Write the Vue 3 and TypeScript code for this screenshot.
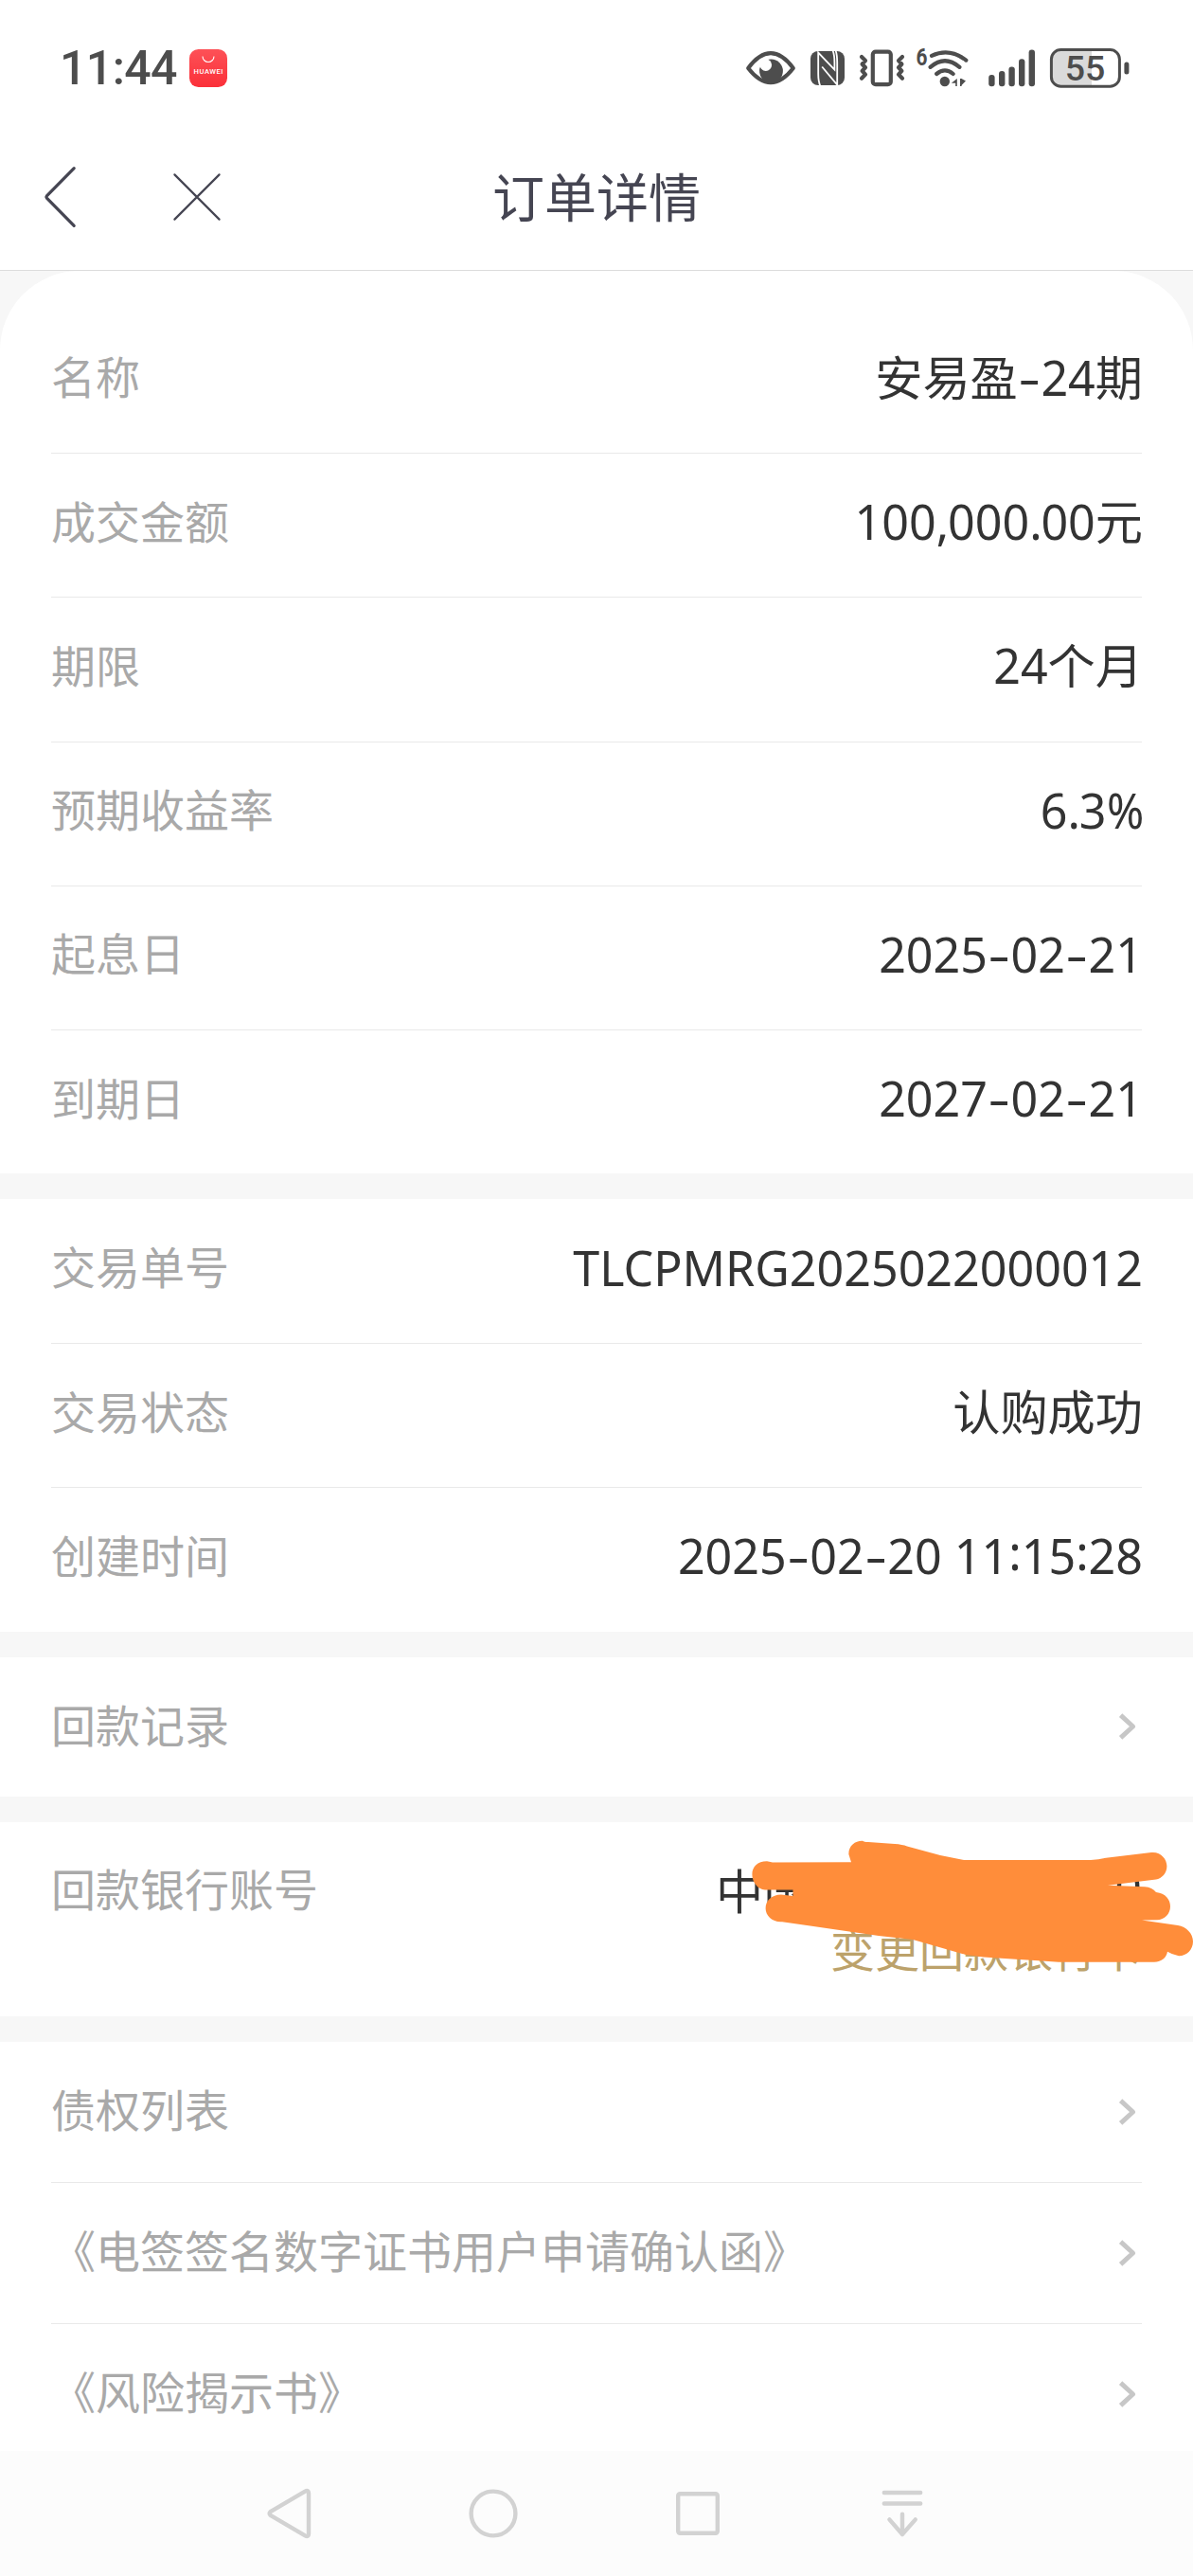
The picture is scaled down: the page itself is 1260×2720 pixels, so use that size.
<script setup lang="ts">
interface Row {
  label: string
  value?: string
  link?: boolean
}

const groups: { kind: string; rows: Row[] }[] = [
  {
    kind: 'top',
    rows: [
      { label: '名称', value: '安易盈-24期' },
      { label: '成交金额', value: '100,000.00元' },
      { label: '期限', value: '24个月' },
      { label: '预期收益率', value: '6.3%' },
      { label: '起息日', value: '2025-02-21' },
      { label: '到期日', value: '2027-02-21' },
    ],
  },
  {
    kind: 'trade',
    rows: [
      { label: '交易单号', value: 'TLCPMRG2025022000012' },
      { label: '交易状态', value: '认购成功' },
      { label: '创建时间', value: '2025-02-20 11:15:28' },
    ],
  },
  { kind: 'links', rows: [{ label: '回款记录', link: true }] },
]

const documents: Row[] = [
  { label: '债权列表', link: true },
  { label: '《电签签名数字证书用户申请确认函》', link: true },
  { label: '《风险揭示书》', link: true },
]

// Punctuation gets its own metrics, so a value is split around it.
const marks: Record<string, string> = { '-': 'dash', ':': 'colon', ',': 'point', '.': 'point', '%': 'percent' }
const pieces = (value: string): string[] => value.split(/([-:,.%])/).filter((piece) => piece !== '')
const pieceClass = (piece: string): string => marks[piece] ?? ''
</script>

<template>
  <div class="screen">
    <header class="status">
      <span class="clock">11:44</span>
      <svg class="store" viewBox="0 0 40 40" width="40" height="40">
        <defs>
          <linearGradient id="store-red" x1="0" y1="0" x2="0" y2="1">
            <stop offset="0" stop-color="#fd5157" />
            <stop offset="1" stop-color="#fb3039" />
          </linearGradient>
        </defs>
        <rect width="40" height="40" rx="9.5" fill="url(#store-red)" />
        <path d="M14 7.5a6 6 0 0 0 12 0" fill="none" stroke="#fff" stroke-width="1.1" />
        <text x="20" y="25.8" text-anchor="middle" textLength="31" class="brand">HUAWEI</text>
      </svg>
      <svg class="indicators" viewBox="20 0 420 110" width="420" height="110">
        <g fill="none" stroke="#4d4d4d" stroke-width="4.2" stroke-linecap="round" stroke-linejoin="round">
          <path d="M30.2 52C38 41.5 46 36.2 54 36.2S70 41.5 77.8 52C70 62 62 67.2 54 67.2S38 62 30.2 52Z" />
          <rect x="161.8" y="34.6" width="19" height="34.6" rx="3" />
          <path d="M150 40l4 4-3.4 3.7 3.4 3.6-3.4 3.6 3.4 3.7-4 4.2M193 40l-4 4 3.4 3.7-3.4 3.6 3.4 3.6-3.4 3.7 4 4.2" />
          <path d="M224 38.8Q243 30 260.3 43.6M222.6 50.8Q238 37.6 253.4 50.8M229.2 58Q238 50.8 246.6 58" />
        </g>
        <g fill="#4d4d4d">
          <circle cx="54.5" cy="55" r="12.4" />
          <circle cx="237.8" cy="66" r="5.2" />
          <path d="M250.8 63v8h-1.6v-3.2h-4.4zM254 71v-8h1.6l4.4 2.6-4.4 4.4v1z" />
          <rect x="96" y="34" width="36" height="36" rx="8" />
          <rect x="284.2" y="59" width="6.4" height="12.2" rx="3" />
          <rect x="295" y="55" width="6.4" height="16.2" rx="3" />
          <rect x="305.4" y="50.4" width="6.4" height="20.8" rx="3" />
          <rect x="316" y="42.2" width="6.4" height="29" rx="3" />
          <rect x="326.6" y="32.6" width="6.4" height="38.6" rx="3" />
          <rect x="427.4" y="45.6" width="5" height="13" rx="2.5" />
        </g>
        <circle cx="48.8" cy="48.6" r="6.3" fill="#fff" />
        <g fill="none" stroke="#fff" stroke-width="1.8">
          <path d="M106.4 71Q104.2 66 104.2 58V35.6L121.4 53.6V46Q121.4 38 119.6 33.5" />
          <path d="M108.2 50.5L124.2 69.5V46Q124.2 38 122.6 33.5" />
        </g>
        <path d="M360 33.5H393V71.5H360Q350 71.5 350 61V43Q350 33.5 360 33.5Z" fill="#dadada" />
        <rect x="350.4" y="32.6" width="72" height="38.6" rx="10" fill="none" stroke="#4d4d4d" stroke-width="3" />
        <text x="386" y="65.3" text-anchor="middle" class="level">55</text>
        <text transform="translate(213.6 49.2) scale(0.82 1)" text-anchor="middle" class="generation">6</text>
      </svg>
    </header>

    <nav class="titlebar">
      <svg class="back" viewBox="0 0 40 70" width="40" height="70">
        <path d="M34.2 4.6L5.4 33.8Q4.4 35 5.4 36.2L34.2 65.4" />
      </svg>
      <svg class="close" viewBox="0 0 52 52" width="52" height="52">
        <path d="M2.4 2.4L49.6 49.6M49.6 2.4L2.4 49.6" />
      </svg>
      <h1>订单详情</h1>
    </nav>

    <main>
      <section v-for="group in groups" :key="group.kind" class="card" :class="group.kind">
        <div v-for="row in group.rows" :key="row.label" class="row">
          <span class="label">{{ row.label }}</span>
          <span v-if="row.value" class="value"><span v-for="(piece, i) in pieces(row.value)" :key="i" :class="pieceClass(piece)">{{ piece }}</span></span>
          <svg v-if="row.link" class="chevron" viewBox="0 0 24 32" width="24" height="32">
            <path d="M3.6 4.2L16.6 16L3.6 27.8" />
          </svg>
        </div>
      </section>

      <section class="card bank">
        <span class="label">回款银行账号</span>
        <div class="bank-info">
          <div class="account"><span class="bank-name">中国</span><span>0</span></div>
          <a class="change">变更回款银行卡</a>
        </div>
        <svg class="scribble" viewBox="790 1940 470 136" width="470" height="136">
          <path
            d="M896.4 1958C896 1949 903 1943.5 911 1943.7C912 1944.5 914 1945 917 1945L945 1947Q953 1947.5 958 1949.5L993 1959L1018 1964H1152Q1160 1963.5 1168 1961.7L1216 1956C1226 1955 1232.4 1963 1232.4 1970.5C1232.4 1978 1227 1983.5 1221 1984.5L1170 1990.8L1209 1992.3Q1217 1993 1221 1998C1231 1999 1236 2006 1236 2013C1236 2021 1230 2027.2 1222 2027.2L1206 2027.6L1244 2033C1253 2034 1260 2042 1260 2050C1260 2059 1253 2065.4 1245 2065.2Q1238 2064 1233 2060.8C1232 2067 1227 2071.6 1219 2071.7H1118Q1075 2069 1039 2066.5L1020 2064L964 2048L928 2044L826 2029.2C816 2030 808.6 2023 808.6 2015C808.6 2007 815 2000.6 825 2000.6L837.5 2002V1995.4H808C800 1995.2 794.4 1987 794.4 1979.3C794.4 1971 800 1965.2 810 1965.2L816 1966.6L899 1966.2Z"
          />
        </svg>
      </section>

      <section class="card documents">
        <div v-for="row in documents" :key="row.label" class="row">
          <span class="label">{{ row.label }}</span>
          <svg class="chevron" viewBox="0 0 24 32" width="24" height="32">
            <path d="M3.6 4.2L16.6 16L3.6 27.8" />
          </svg>
        </div>
      </section>
    </main>

    <footer class="softkeys">
      <svg viewBox="0 0 60 60" width="60" height="60">
        <path d="M10.6 28.2L47.2 6.6Q51 4.6 51 8.6V51.4Q51 55.4 47.2 53.4L10.6 31.8Q8.6 30 10.6 28.2Z" />
      </svg>
      <svg viewBox="0 0 60 60" width="60" height="60"><circle cx="30" cy="30" r="23.4" /></svg>
      <svg viewBox="0 0 60 60" width="60" height="60"><rect x="9.2" y="9.2" width="41.6" height="41.6" rx="2" /></svg>
      <svg viewBox="0 0 60 60" width="60" height="60">
        <path d="M10.8 8H49.2M10.8 19.5H49.2M30 30.6V52M16.4 36.4L30 52L43.8 36.4" />
      </svg>
    </footer>
  </div>
</template>

<style>
body {
  margin: 0;
  background: #f7f7f7;
}
</style>

<style scoped>
.screen {
  width: 1260px;
  height: 2720px;
  display: flex;
  flex-direction: column;
  overflow: hidden;
  background: #f7f7f7;
  font-family: 'Noto Sans', 'Noto Sans CJK SC', sans-serif;
}

svg {
  display: block;
  flex: none;
}

.status {
  height: 144px;
  flex: none;
  display: flex;
  align-items: center;
  padding-left: 63px;
  background: #fff;
}

.clock {
  width: 137px;
  font: 500 50px/60px Roboto, sans-serif;
  letter-spacing: -0.6px;
  color: #4d4d4d;
}

.brand {
  font: 500 7.6px Roboto, sans-serif;
  fill: #fff;
}

.indicators {
  margin: 5px 60px 0 auto;
}

.level {
  font: 500 37.5px Roboto, sans-serif;
  fill: #4d4d4d;
}

.generation {
  font: 700 25.5px Roboto, sans-serif;
  fill: #4d4d4d;
}

.titlebar {
  height: 142px;
  flex: none;
  display: grid;
  grid-template-columns: 182px 226px 444px 1fr;
  align-items: center;
  box-sizing: border-box;
  padding-bottom: 13px;
  background: #fff;
  border-bottom: 1px solid #dcdcdc;
}

.titlebar path {
  fill: none;
  stroke: #454552;
  stroke-linecap: round;
  stroke-linejoin: round;
}

.back {
  margin-left: 44px;
}

.back path {
  stroke-width: 3.2;
}

.close path {
  stroke-width: 2.2;
}

h1 {
  margin: 0;
  padding-bottom: 6px;
  font: 400 55px/80px 'Noto Sans CJK SC', sans-serif;
  text-align: center;
  color: #454552;
}

main {
  flex: 1;
  min-height: 0;
  display: flex;
  flex-direction: column;
  gap: 27px;
}

.card {
  flex: none;
  box-sizing: border-box;
  padding: 0 54px;
  background: #fff;
}

.top {
  height: 953px;
  padding-top: 40px;
  border-radius: 84px 84px 0 0;
}

.trade {
  height: 456.5px;
}

.links {
  height: 147px;
}

.row {
  height: 152.2px;
  box-sizing: border-box;
  display: flex;
  align-items: center;
  justify-content: space-between;
  padding-bottom: 12px;
}

.row + .row {
  border-top: 1px solid #e9e9e9;
}

.links .row,
.documents .row {
  height: 149px;
  padding-bottom: 8px;
}

.documents .row:first-child {
  height: 148px;
}

.label {
  font: 400 47px/70px 'Noto Sans CJK SC', sans-serif;
  color: #a9a9a9;
  white-space: nowrap;
}

.value,
.account {
  font-size: 50.2px;
  line-height: 70px;
  color: #333;
  white-space: nowrap;
}

.value {
  padding-top: 5px;
  margin-right: -1px;
}

.dash {
  display: inline-block;
  width: 24.6px;
  text-align: center;
  transform: scaleX(1.45);
}

.colon {
  display: inline-block;
  transform: translateY(-4px);
}

.point {
  letter-spacing: -1.2px;
}

.percent {
  display: inline-block;
  width: 38.5px;
  transform: scaleX(0.94);
  transform-origin: left;
}

.links .chevron {
  margin: 5px 2px 0 0;
}

.documents .chevron {
  margin: 8px 2px 0 0;
}

.chevron path {
  fill: none;
  stroke: #c7c7c7;
  stroke-width: 5;
  stroke-linejoin: round;
}

.bank {
  position: relative;
  height: 205px;
  display: flex;
  justify-content: space-between;
  padding-top: 34px;
}

.bank-info {
  display: flex;
  flex-direction: column;
  align-items: flex-end;
}

.account {
  width: 450px;
  height: 70px;
  display: flex;
  justify-content: space-between;
}

.bank-name {
  padding-top: 4px;
}

.change {
  margin-top: -6px;
  font: 400 47px/70px 'Noto Sans CJK SC', sans-serif;
  color: #bca26b;
}

.scribble {
  position: absolute;
  top: 16px;
  right: 0;
}

.scribble path {
  fill: #ff8d3a;
}

.documents {
  height: 433px;
}

.softkeys {
  height: 132px;
  flex: none;
  box-sizing: border-box;
  display: grid;
  grid-template-columns: repeat(4, 216px);
  justify-items: center;
  align-items: center;
  padding-left: 196.5px;
  background: #fcfcfc;
}

.softkeys svg * {
  fill: none;
  stroke: #d2d2d2;
  stroke-width: 4.4;
  stroke-linecap: round;
  stroke-linejoin: round;
}
</style>
